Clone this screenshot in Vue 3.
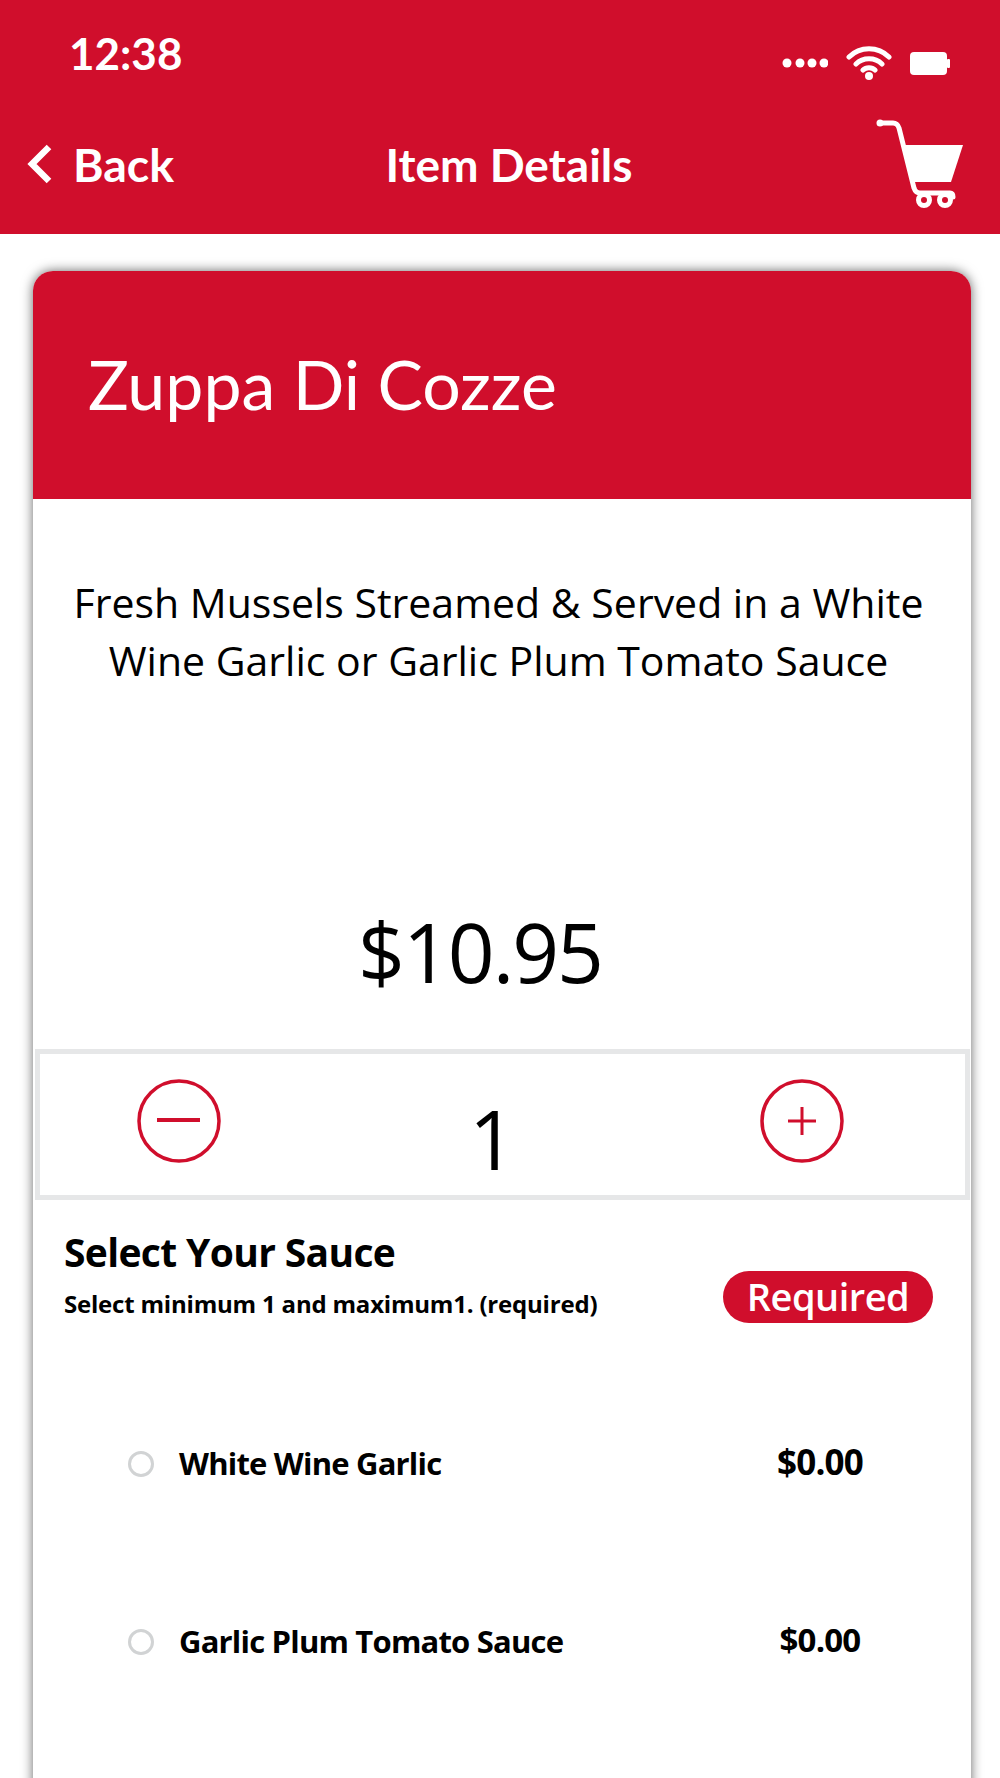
<template>
  <div class="screen">
    <header class="top">
      <div class="status">
        <span class="time">12:38</span>
        <div class="status-icons">
          <svg class="dots" width="46" height="12" viewBox="0 0 46 12">
            <circle cx="5" cy="6" r="4.5" /><circle cx="18" cy="6" r="4.5" /><circle cx="30" cy="6" r="4.5" /><circle cx="42" cy="6" r="4.5" />
          </svg>
          <svg class="wifi" width="46" height="36" viewBox="0 0 46 36">
            <path d="M3 12C14 1 32 1 43 12M10 19C17 12 29 12 36 19M17 25C20 22 26 22 29 25" />
            <circle cx="23" cy="31" r="4" />
          </svg>
          <svg class="battery" width="42" height="24" viewBox="0 0 42 24">
            <rect x="0" y="1" width="37" height="23" rx="4" />
            <rect x="37" y="8" width="3" height="9" rx="1" />
          </svg>
        </div>
      </div>
      <nav class="nav">
        <div class="back">
          <svg width="28" height="40" viewBox="0 0 28 40"><path d="M23 3L6 20L23 37" /></svg>
          <span>Back</span>
        </div>
        <span class="nav-title">Item Details</span>
        <svg class="cart" width="90" height="92" viewBox="0 0 90 92">
          <path class="cart-line" d="M4 5H17C20 5 22 7 23 10L38 70C39 73 41 75 44 75H74C76 75 77 76 77 79" />
          <circle class="cart-line" cx="48" cy="82" r="5.5" />
          <circle class="cart-line" cx="69" cy="82" r="5.5" />
          <circle cx="4" cy="5" r="3.5" />
          <path d="M28 27H87L75 64H37Z" />
        </svg>
      </nav>
    </header>

    <main class="card">
      <div class="card-head">Zuppa Di Cozze</div>
      <p class="desc">Fresh Mussels Streamed &amp; Served in a White<br />Wine Garlic or Garlic Plum Tomato Sauce</p>
      <div class="price">$10.95</div>
      <div class="qty">
        <svg class="qty-btn" width="84" height="84" viewBox="0 0 84 84">
          <circle cx="42" cy="42" r="40" />
          <path class="minus" d="M20 41H63" />
        </svg>
        <span class="qty-num">1</span>
        <svg class="qty-btn" width="84" height="84" viewBox="0 0 84 84">
          <circle cx="42" cy="42" r="40" />
          <path d="M28 42H56M42 28V56" />
        </svg>
      </div>
      <section class="options">
        <div class="options-head">
          <div>
            <h2>Select Your Sauce</h2>
            <p>Select minimum 1 and maximum1. (required)</p>
          </div>
          <span class="pill">Required</span>
        </div>
        <div v-for="opt in sauces" :key="opt" class="row">
          <span class="radio"></span>
          <span class="row-name">{{ opt }}</span>
          <span class="row-price">$0.00</span>
        </div>
      </section>
    </main>
  </div>
</template>

<script setup>
const sauces = ['White Wine Garlic', 'Garlic Plum Tomato Sauce']
</script>

<style>
html, body {
  margin: 0;
  background: #fff;
  overflow: hidden;
}
</style>

<style scoped>
.screen {
  width: 1000px;
  height: 1778px;
  overflow: hidden;
  background: #fff;
  font-family: "Open Sans", "Noto Sans", sans-serif;
  color: #000;
}

.top {
  height: 234px;
  background: #d00e2c;
  color: #fff;
  box-sizing: border-box;
  padding-top: 28px;
}

.status {
  display: flex;
  justify-content: space-between;
  padding: 0 48px 0 69px;
  height: 88px;
}

.time {
  font-family: Lato, sans-serif;
  font-weight: 700;
  font-size: 44px;
  line-height: 50px;
}

.status-icons {
  display: flex;
  align-items: center;
  gap: 18px;
  height: 70px;
  fill: #fff;
}

.wifi path {
  fill: none;
  stroke: #fff;
  stroke-width: 5;
  stroke-linecap: round;
}

.nav {
  display: flex;
  align-items: center;
  justify-content: space-between;
  padding: 0 34px 0 26px;
  position: relative;
  height: 96px;
}

.back {
  display: flex;
  align-items: center;
  gap: 19px;
  font-family: Lato, sans-serif;
  font-weight: 700;
  font-size: 46.5px;
}

.back svg path {
  fill: none;
  stroke: #fff;
  stroke-width: 6.5;
}

.nav-title {
  position: absolute;
  left: 0;
  right: 0;
  text-align: center;
  font-family: Lato, sans-serif;
  font-weight: 700;
  font-size: 46px;
  margin-left: 18px;
}

.cart {
  fill: #fff;
}

.cart .cart-line {
  fill: none;
  stroke: #fff;
  stroke-width: 5;
  stroke-linecap: round;
}

.card {
  margin: 37px 29px 0 33px;
  height: 1600px;
  border-radius: 20px 20px 0 0;
  background: #fff;
  box-shadow: 0 0 12px rgba(0, 0, 0, 0.6);
  overflow: hidden;
}

.card-head {
  height: 228px;
  background: #d00e2c;
  color: #fff;
  font-family: Lato, sans-serif;
  font-size: 68px;
  line-height: 226px;
  padding-left: 55px;
}

.desc {
  margin: 74px 7px 0 0;
  text-align: center;
  font-size: 41px;
  line-height: 58px;
}

.price {
  margin: 207px 44px 0 0;
  text-align: center;
  font-size: 82px;
  line-height: 110px;
  letter-spacing: -2px;
}

.qty {
  margin: 43px 1px 0 2px;
  height: 151px;
  box-sizing: border-box;
  border: 5px solid #e6e7e8;
  display: flex;
  align-items: center;
  padding: 0 121px 8px 97px;
  justify-content: space-between;
}

.qty-btn circle {
  fill: none;
  stroke: #d00e2c;
  stroke-width: 3.5;
}

.qty-btn path {
  fill: none;
  stroke: #d00e2c;
  stroke-width: 3;
}

.qty-btn .minus {
  stroke-width: 4;
}

.qty-num {
  font-size: 82px;
  line-height: 82px;
  margin-top: 34px;
  margin-left: 4px;
}

.options {
  padding: 0 38px 0 31px;
}

.options-head {
  display: flex;
  justify-content: space-between;
  align-items: flex-start;
  padding-top: 27px;
  margin-bottom: 52px;
}

.options-head h2 {
  margin: 0;
  font-size: 39px;
  line-height: 50px;
  font-weight: 700;
  letter-spacing: -0.65px;
}

.options-head p {
  margin: 12px 0 0;
  font-size: 24px;
  line-height: 30px;
  font-weight: 700;
  letter-spacing: -0.2px;
}

.pill {
  width: 210px;
  height: 52px;
  border-radius: 26px;
  background: #d00e2c;
  color: #fff;
  text-align: center;
  font-size: 38px;
  line-height: 50px;
  font-weight: 600;
  letter-spacing: -0.5px;
  margin-top: 44px;
}

.row {
  display: flex;
  align-items: center;
  height: 178px;
  padding-left: 64px;
  padding-right: 63px;
}

.radio {
  width: 26px;
  height: 26px;
  box-sizing: border-box;
  border: 3px solid #d1d3d4;
  border-radius: 50%;
  margin-right: 25px;
}

.row-name {
  font-size: 31px;
  font-weight: 700;
  letter-spacing: -0.8px;
  flex: 1;
  margin-bottom: 3px;
}

.row-price {
  width: 100px;
  text-align: center;
  font-size: 33px;
  font-weight: 700;
  letter-spacing: -0.8px;
  margin-bottom: 6px;
}

.row:nth-of-type(2) .row-price {
  font-size: 35px;
}
</style>
